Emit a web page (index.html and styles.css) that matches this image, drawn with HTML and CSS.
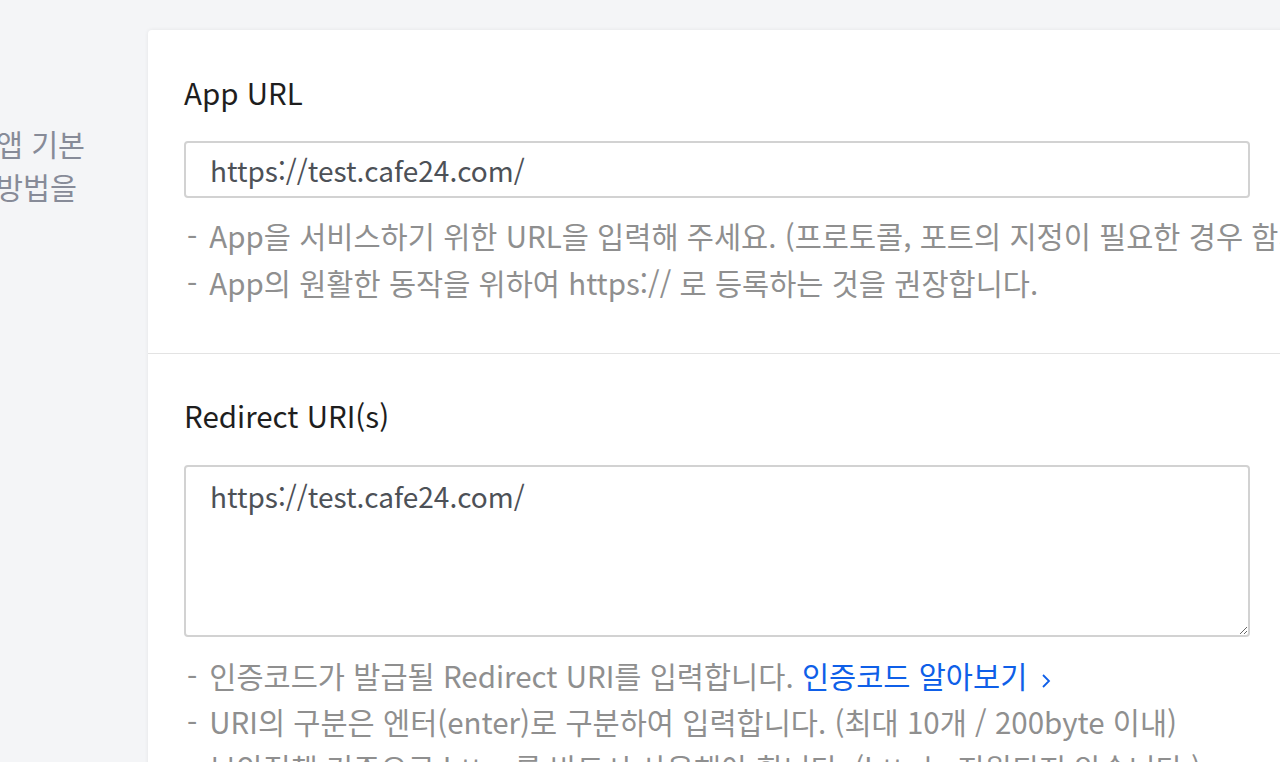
FILE: index.html
```html
<!DOCTYPE html>
<html lang="ko">
<head>
<meta charset="utf-8">
<title>App settings</title>
<link rel="stylesheet" href="styles.css">
</head>
<body>
<div class="page">
  <aside class="side">
    <p class="side-text">앱 기본<br>방법을</p>
  </aside>
  <main class="card">
    <section class="field">
      <h2 class="field-title">App URL</h2>
      <input class="text-input" type="text" value="https://test.cafe24.com/">
      <ul class="help">
        <li><span class="dash">-</span>App을 서비스하기 위한 URL을 입력해 주세요. (프로토콜, 포트의 지정이 필요한 경우 함께 입력해 주세요.)</li>
        <li><span class="dash">-</span>App의 원활한 동작을 위하여 https:// 로 등록하는 것을 권장합니다.</li>
      </ul>
    </section>
    <section class="field field-second">
      <h2 class="field-title">Redirect URI(s)</h2>
      <textarea class="text-area">https://test.cafe24.com/</textarea>
      <ul class="help help-second">
        <li><span class="dash">-</span>인증코드가 발급될 Redirect URI를 입력합니다. <a class="link" href="#">인증코드 알아보기<svg class="chev" width="10" height="16" viewBox="0 0 10 16" aria-hidden="true"><path d="M2 2 L8 8 L2 14" fill="none" stroke="currentColor" stroke-width="1.8"/></svg></a></li>
        <li><span class="dash">-</span>URI의 구분은 엔터(enter)로 구분하여 입력합니다. (최대 10개 / 200byte 이내)</li>
        <li><span class="dash">-</span>보안정책 기준으로 https를 반드시 사용해야 합니다. (http는 지원되지 않습니다.)</li>
      </ul>
    </section>
  </main>
</div>
</body>
</html>
```

FILE: styles.css
```css
* { box-sizing: border-box; }
html, body { margin: 0; padding: 0; }
body {
  background: #f4f5f7;
  font-family: "Noto Sans CJK KR", "Noto Sans", sans-serif;
  overflow: hidden;
  height: 762px;
}
.page {
  display: flex;
  width: 1400px;
}
.side {
  width: 148px;
  flex: none;
  overflow: hidden;
  padding-top: 122px;
}
.side-text {
  margin: 0 0 0 -4px;
  font-size: 29.3px;
  line-height: 43px;
  color: #878b98;
  white-space: nowrap;
}
.card {
  flex: 1;
  margin-top: 30px;
  background: #fff;
  border-radius: 4px 0 0 0;
  box-shadow: 0 0 4px rgba(0, 0, 0, 0.07);
  min-height: 800px;
}
.field {
  padding: 41px 0 47px 36px;
  border-bottom: 1px solid #e3e3e3;
}
.field-second {
  padding-top: 40px;
  border-bottom: none;
}
.field-title {
  margin: 0;
  font-size: 29.5px;
  line-height: 42px;
  font-weight: 400;
  color: #1e1e1e;
}
.text-input,
.text-area {
  display: block;
  width: 1066px;
  margin-top: 28px;
  border: 2px solid #d2d2d2;
  border-radius: 4px;
  background: #fff;
  font-family: "Noto Sans CJK KR", "Noto Sans", sans-serif;
  font-size: 28px;
  color: #4d5157;
  padding: 0 24px;
  outline: none;
}
.text-input {
  height: 57px;
}
.text-area {
  margin-top: 29px;
  height: 172px;
  padding-top: 8px;
  line-height: 42px;
  resize: vertical;
}
.help {
  list-style: none;
  margin: 14px 0 0;
  padding: 0 0 0 3px;
  font-size: 29.5px;
  line-height: 47px;
  color: #8f8f8f;
  white-space: nowrap;
}
.dash {
  display: inline-block;
  margin-right: 12px;
}
.help-second {
  margin-top: 15px;
  line-height: 46px;
}
.link {
  color: #0f5fe8;
  text-decoration: none;
}
.chev {
  margin-left: 14px;
  vertical-align: -1px;
}
```
